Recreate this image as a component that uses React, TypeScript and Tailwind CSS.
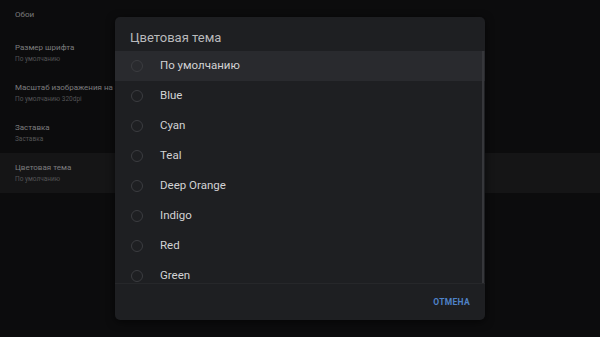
import React from 'react';

const settings = [
  { title: 'Обои' },
  { title: 'Размер шрифта', sub: 'По умолчанию' },
  { title: 'Масштаб изображения на экране', sub: 'По умолчанию 320dpi' },
  { title: 'Заставка', sub: 'Заставка' },
  { title: 'Цветовая тема', sub: 'По умолчанию', active: true },
];

const themes = ['По умолчанию', 'Blue', 'Cyan', 'Teal', 'Deep Orange', 'Indigo', 'Red', 'Green'];

export default function App() {
  return (
    <div
      className="relative w-[600px] h-[337px] overflow-hidden bg-[#0c0c0d]"
      style={{ fontFamily: 'Roboto, "Noto Sans", sans-serif' }}
    >
      {/* settings list behind the dialog */}
      <div className="flex flex-col pt-[9px]">
        {settings.map((s) => (
          <div
            key={s.title}
            className={`flex flex-col justify-center px-[15px] ${s.sub ? 'h-[40px]' : 'h-[12px] mb-[12px]'} ${s.active ? 'bg-[#151516]' : ''}`}
          >
            <div className="w-[330px] truncate text-[8px] leading-[12px] text-[#7c7c7e]">{s.title}</div>
            {s.sub && <div className="text-[6.5px] leading-[11px] text-[#535355]">{s.sub}</div>}
          </div>
        ))}
      </div>

      {/* dialog */}
      <div className="absolute left-[115px] top-[17px] w-[370px] h-[303px] rounded-[5px] bg-[#1e1f22] flex flex-col overflow-hidden shadow-[0_2px_8px_rgba(0,0,0,0.6)]">
        <div className="h-[34px] pt-[13px] px-[15px] text-[13px] leading-[16px] text-[#b9b9bb]">Цветовая тема</div>
        <div className="relative h-[232px] overflow-hidden">
          {themes.map((t, i) => (
            <div
              key={t}
              className={`h-[30px] flex items-center pl-[16px] ${i === 0 ? 'bg-[#292a2e]' : ''}`}
            >
              <span className="w-[12px] h-[12px] rounded-full border-[1.5px] border-[#3b3c40]" />
              <span className="ml-[17px] text-[11.5px] text-[#d2d2d4]">{t}</span>
            </div>
          ))}
          <div className="absolute right-[1px] top-0 bottom-0 w-[2px] bg-[#36373b]" />
        </div>
        <div className="h-px bg-[#26272a]" />
        <div className="flex-1 flex items-center justify-end pr-[15px]">
          <span className="text-[8.5px] font-bold tracking-[0.3px] text-[#4f82c8]">ОТМЕНА</span>
        </div>
      </div>
    </div>
  );
}
